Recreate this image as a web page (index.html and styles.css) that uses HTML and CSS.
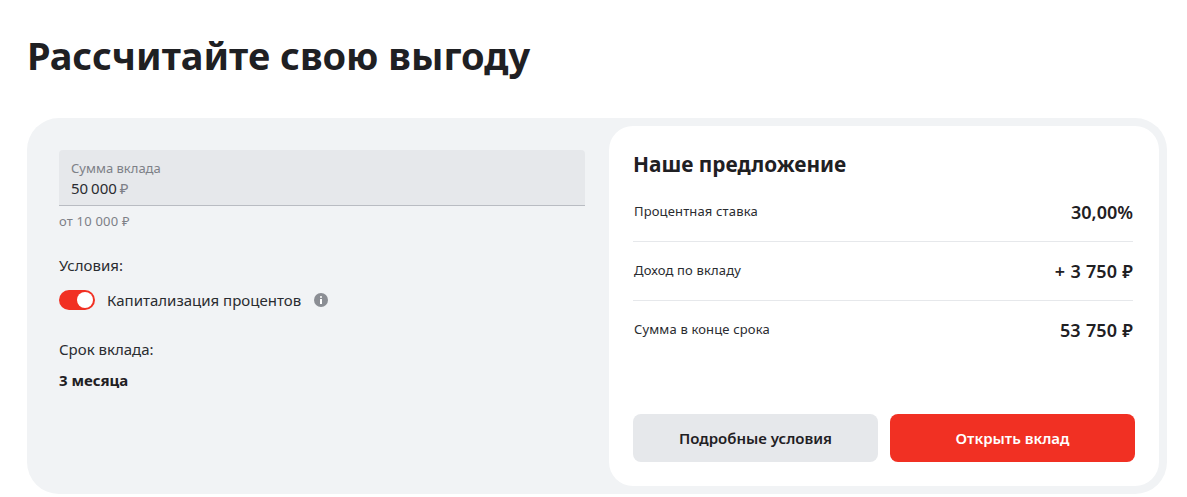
FILE: index.html
```html
<!DOCTYPE html>
<html lang="ru">
<head>
<meta charset="utf-8">
<title>Рассчитайте свою выгоду</title>
<link rel="stylesheet" href="styles.css">
</head>
<body>
<main class="page">
  <h1 class="title">Рассчитайте свою выгоду</h1>
  <section class="panel">
    <div class="form">
      <div class="field">
        <span class="field-label">Сумма вклада</span>
        <span class="field-value">50 000 <span class="currency">₽</span></span>
      </div>
      <p class="hint">от 10 000 ₽</p>
      <p class="label conditions">Условия:</p>
      <div class="switch-row">
        <span class="switch"><span class="knob"></span></span>
        <span class="switch-text">Капитализация процентов</span>
        <svg class="info" viewBox="0 0 14 14" width="14" height="14" aria-hidden="true">
          <circle cx="7" cy="7" r="7" fill="#8b8e94"/>
          <rect x="6" y="6" width="2" height="5" fill="#fff"/>
          <rect x="6" y="3" width="2" height="2" rx="1" fill="#fff"/>
        </svg>
      </div>
      <p class="label term">Срок вклада:</p>
      <p class="term-value">3 месяца</p>
    </div>
    <aside class="offer">
      <h2 class="offer-title">Наше предложение</h2>
      <div class="rows">
        <div class="row"><span class="row-name">Процентная ставка</span><span class="row-value">30,00%</span></div>
        <div class="row"><span class="row-name">Доход по вкладу</span><span class="row-value">+ 3 750 ₽</span></div>
        <div class="row"><span class="row-name">Сумма в конце срока</span><span class="row-value">53 750 ₽</span></div>
      </div>
      <div class="actions">
        <button class="btn btn-gray" type="button">Подробные условия</button>
        <button class="btn btn-red" type="button">Открыть вклад</button>
      </div>
    </aside>
  </section>
</main>
</body>
</html>
```

FILE: styles.css
```css
* { box-sizing: border-box; }
html, body { margin: 0; height: 100%; background: #fff; overflow: hidden; }
body { font-family: "Noto Sans", "Open Sans", sans-serif; color: #1f2023; }
p, h1, h2 { margin: 0; }
.page { padding: 28px 20px 0 27px; }
.title { font-size: 38px; line-height: 54px; font-weight: 700; color: #1f2023; margin-bottom: 36px; }
.panel { display: flex; justify-content: space-between; height: 376px; padding: 8px; background: #f1f3f5; border-radius: 32px; }
.form { width: 526px; margin-left: 24px; padding-top: 24px; }
.field { display: flex; flex-direction: column; height: 56px; padding: 10px 12px 0; background: #e6e8eb; border-bottom: 1px solid #b9bcc2; border-radius: 4px 4px 0 0; }
.field-label { font-size: 13px; line-height: 17px; color: #7d8087; }
.field-value { font-size: 15px; line-height: 22px; color: #2a2c30; word-spacing: -1px; }
.currency { color: #7d8087; }
.hint { margin-top: 6px; font-size: 13px; line-height: 18px; letter-spacing: 0.2px; color: #7d8087; }
.label { font-size: 15px; line-height: 20px; color: #2a2c30; }
.conditions { margin-top: 25px; }
.switch-row { display: flex; align-items: center; margin-top: 15px; height: 20px; }
.switch { display: flex; justify-content: flex-end; align-items: center; width: 36px; height: 20px; padding: 2px; background: #f13023; border-radius: 10px; }
.knob { width: 16px; height: 16px; background: #fff; border-radius: 50%; }
.switch-text { margin-left: 12px; font-size: 15px; line-height: 20px; color: #2a2c30; }
.info { margin-left: 13px; }
.term { margin-top: 29px; }
.term-value { margin-top: 11px; font-size: 15px; line-height: 20px; font-weight: 700; color: #1f2023; }
.offer { display: flex; flex-direction: column; width: 550px; height: 360px; padding: 24px; background: #fff; border-radius: 24px; }
.offer-title { font-size: 20.8px; line-height: 28px; font-weight: 700; color: #1f2023; }
.rows { display: flex; flex-direction: column; margin-top: 5px; padding-right: 2px; }
.row { display: flex; justify-content: space-between; align-items: flex-start; height: 59px; padding: 12px 0 0 1px; border-bottom: 1px solid #e6e8eb; }
.row:last-child { border-bottom: 0; }
.row-name { font-size: 13px; line-height: 18px; margin-top: 7px; letter-spacing: 0.15px; color: #2a2c30; }
.row-value { font-size: 18px; line-height: 24px; margin-top: 5px; font-weight: 600; word-spacing: 0.7px; color: #1f2023; }
.actions { display: flex; gap: 12px; margin-top: auto; }
.btn { flex: 1; height: 48px; border: 0; border-radius: 8px; font-family: inherit; font-size: 15px; font-weight: 600; }
.btn-gray { background: #e6e8eb; color: #1f2023; }
.btn-red { background: #f13023; color: #fff; }
```
